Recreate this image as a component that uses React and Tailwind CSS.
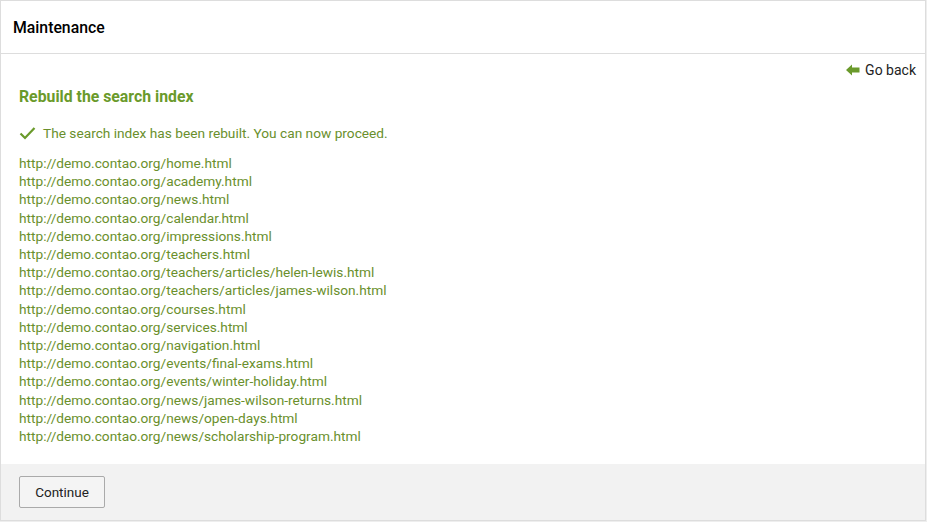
import React from "react";

const links = [
  "home.html",
  "academy.html",
  "news.html",
  "calendar.html",
  "impressions.html",
  "teachers.html",
  "teachers/articles/helen-lewis.html",
  "teachers/articles/james-wilson.html",
  "courses.html",
  "services.html",
  "navigation.html",
  "events/final-exams.html",
  "events/winter-holiday.html",
  "news/james-wilson-returns.html",
  "news/open-days.html",
  "news/scholarship-program.html",
];

export default function App() {
  return (
    <div className="w-[927px] h-[522px] bg-[#eeeeee] font-['Roboto',sans-serif]">
      <div className="w-[926px] h-[521px] bg-white border border-[#dddddd] flex flex-col">
        <div className="h-[53px] shrink-0 flex items-center px-3 pt-[1px] border-b border-[#dddddd]">
          <h1 className="text-[15.8px] font-medium text-black">Maintenance</h1>
        </div>
        <div className="flex-1 flex flex-col">
          <div className="flex justify-end pt-[7px] pr-[9px]">
            <a className="flex items-center gap-[5px] text-[14px] text-[#222] leading-[18px]">
              <svg width="14" height="12" viewBox="0 0 14 12">
                <path d="M0 6 L6 0.5 L6 3.5 L13.5 3.5 L13.5 8.5 L6 8.5 L6 11.5 Z" fill="#6a9a2b" />
              </svg>
              Go back
            </a>
          </div>
          <h2 className="px-[18px] mt-[8px] text-[15.8px] font-bold text-[#6a9a2b] leading-[20px]">
            Rebuild the search index
          </h2>
          <div className="px-[18px] mt-[17px] flex items-center gap-[7px] text-[13.7px] text-[#6a8f2c] leading-[18px]">
            <svg width="17" height="14" viewBox="0 0 17 14">
              <path d="M1.5 7.5 L6 12 L15.5 2" stroke="#6a9a2b" strokeWidth="2.2" fill="none" />
            </svg>
            The search index has been rebuilt. You can now proceed.
          </div>
          <div className="px-[18px] mt-[12px] text-[13.7px] leading-[18.2px] text-[#6a8f2c]">
            {links.map((l) => (
              <div key={l}>http://demo.contao.org/{l}</div>
            ))}
          </div>
        </div>
        <div className="h-[56px] shrink-0 bg-[#f2f2f2] flex items-center px-[18px]">
          <button className="h-[32px] w-[86px] border border-[#aaaaaa] rounded-[2px] bg-[#f4f4f4] text-[13.5px] text-[#222]">
            Continue
          </button>
        </div>
      </div>
    </div>
  );
}
